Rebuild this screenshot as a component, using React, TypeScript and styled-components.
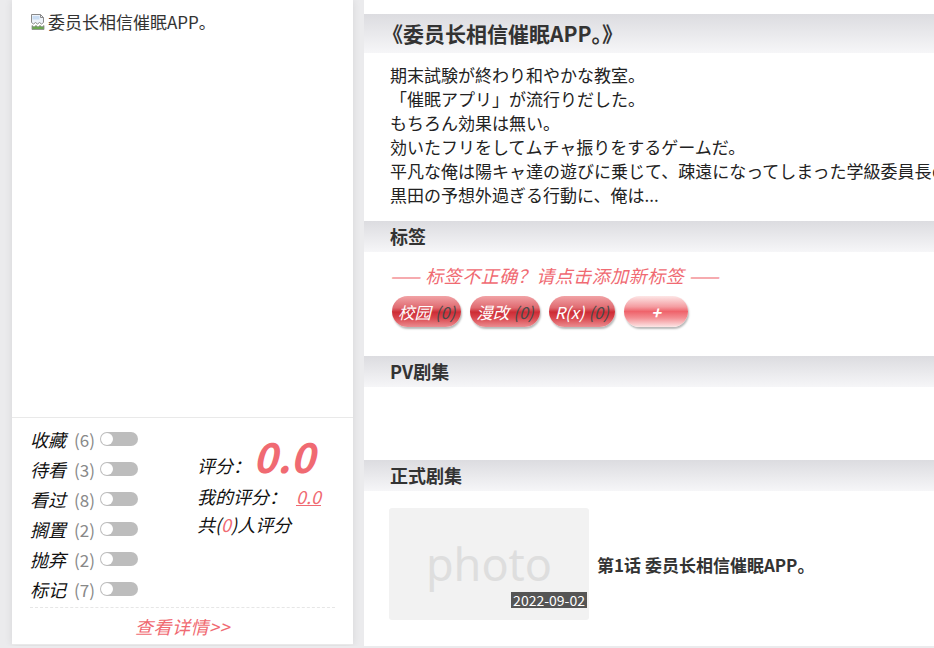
import React from "react";
import styled, { createGlobalStyle } from "styled-components";

const GlobalStyle = createGlobalStyle`
  html, body {
    margin: 0;
    padding: 0;
    background: #ebebed;
    overflow: hidden;
    font-family: "Noto Sans CJK SC", "Noto Sans CJK JP", "Noto Sans", sans-serif;
    color: #222;
  }
  * { box-sizing: border-box; }
`;

const Page = styled.div`
  display: flex;
  align-items: flex-start;
  gap: 11px;
  padding-left: 12px;
  width: max-content;
`;

const LeftCol = styled.aside`
  width: 341px;
  background: #fff;
  box-shadow: 0 0 8px rgba(0, 0, 0, 0.09);
`;

const Cover = styled.div`
  height: 418px;
  padding: 12px 18px;
  border-bottom: 1px solid #e9e9e9;
`;

const AltText = styled.span`
  display: inline-flex;
  align-items: center;
  gap: 2px;
  font-size: 17px;
  line-height: 20px;
  color: #333;
`;

const StatsBox = styled.div`
  display: flex;
  padding: 6px 18px 3px;
`;

const StatusList = styled.div`
  width: 167px;
  display: flex;
  flex-direction: column;
`;

const StatusRow = styled.div`
  display: flex;
  align-items: center;
  height: 30px;
`;

const StatusLabel = styled.span`
  font-size: 18px;
  font-style: italic;
  color: #111;
`;

const StatusCount = styled.span`
  font-size: 17px;
  color: #888;
  margin-left: 8px;
`;

const Toggle = styled.span`
  position: relative;
  display: inline-block;
  width: 38px;
  height: 14px;
  border-radius: 7px;
  background: #bdbdbd;
  margin-left: 5px;
  &::after {
    content: "";
    position: absolute;
    left: 1px;
    top: 1px;
    width: 12px;
    height: 12px;
    border-radius: 50%;
    background: #fff;
  }
`;

const RatingBox = styled.div`
  display: flex;
  flex-direction: column;
  margin-top: 9px;
`;

const RatingMain = styled.div`
  display: flex;
  align-items: baseline;
  height: 44px;
  line-height: 44px;
  margin-bottom: 5px;
`;

const RatingLine = styled.div`
  display: flex;
  align-items: baseline;
  height: 28px;
  line-height: 28px;
  font-size: 18px;
  font-style: italic;
  color: #111;
`;

const RatingLabel = styled.span`
  font-size: 18px;
  font-style: italic;
  color: #111;
`;

const BigScore = styled.span`
  font-size: 41px;
  font-weight: 700;
  font-style: italic;
  color: #f06a72;
  margin-left: 2px;
`;

const MyScore = styled.a`
  color: #f06a72;
  text-decoration: underline;
  margin-left: 9px;
`;

const Pink = styled.span`
  color: #f06a72;
`;

const Dashed = styled.div`
  margin: 0 18px;
  border-top: 1px dashed #e6e6e6;
`;

const DetailLink = styled.a`
  display: block;
  height: 37px;
  line-height: 36px;
  text-align: center;
  font-size: 18px;
  font-style: italic;
  letter-spacing: 0.5px;
  color: #f06a72;
  border-bottom: 1px solid #e9e9e9;
`;

const RightPanel = styled.main`
  width: 820px;
  background: #fff;
  padding: 14px 0 26px;
`;

const SectionHead = styled.h2<{ $big?: boolean }>`
  margin: 0;
  height: ${(p) => (p.$big ? 39 : 31)}px;
  line-height: ${(p) => (p.$big ? 39 : 31)}px;
  padding-left: ${(p) => (p.$big ? 18 : 26)}px;
  font-size: ${(p) => (p.$big ? 21 : 18)}px;
  font-weight: 700;
  color: #333;
  background: linear-gradient(to bottom, #dcdce0, #f6f6f8);
`;

const SectionBody = styled.div<{ $pad: string }>`
  padding: ${(p) => p.$pad};
`;

const Desc = styled.p`
  margin: 0;
  font-size: 17px;
  line-height: 24px;
  color: #222;
  white-space: nowrap;
`;

const TagNotice = styled.div`
  font-size: 18px;
  line-height: 24px;
  font-style: italic;
  letter-spacing: 0.5px;
  color: #f06a72;
`;

const TagRow = styled.div`
  display: flex;
  gap: 9px;
  margin: 9px 0 0 2px;
`;

const Pill = styled.span<{ $add?: boolean }>`
  display: inline-flex;
  align-items: center;
  justify-content: center;
  height: 31px;
  padding: 0 6px;
  min-width: ${(p) => (p.$add ? 64 : 0)}px;
  border-radius: 16px;
  font-size: 16.5px;
  font-style: italic;
  font-weight: ${(p) => (p.$add ? 700 : 400)};
  color: #fff;
  box-shadow: 1px 2px 2px rgba(0, 0, 0, 0.28);
  background: ${(p) =>
    p.$add
      ? "linear-gradient(to bottom, #fde6e6 0%, #f49ca0 35%, #ef636b 50%, #f38c91 70%, #fde6e6 100%)"
      : "linear-gradient(to bottom, #f1a3a6 0%, #e06a70 38%, #cd2c35 52%, #d9454c 70%, #eb8d91 100%)"};
`;

const PillCount = styled.span`
  color: #4a4a4a;
  margin-left: 4px;
`;

const Episode = styled.div`
  display: flex;
  align-items: center;
  gap: 8px;
  margin-left: -1px;
`;

const Thumb = styled.div`
  position: relative;
  width: 200px;
  height: 112px;
  border-radius: 3px;
  background: #f2f2f2;
  display: flex;
  align-items: center;
  justify-content: center;
`;

const ThumbText = styled.span`
  font-family: "Noto Sans", "Open Sans", sans-serif;
  font-size: 45px;
  color: #dedede;
  line-height: 1;
  margin-top: -2px;
`;

const DateBadge = styled.span`
  position: absolute;
  right: 2px;
  bottom: 12px;
  height: 16px;
  line-height: 16px;
  padding: 0 2px;
  font-size: 14px;
  color: #fff;
  background: #555;
`;

const EpTitle = styled.span`
  font-size: 17px;
  font-weight: 700;
  color: #333;
`;

const BrokenImage = () => (
  <svg width="16" height="18" viewBox="0 0 16 18">
    <path d="M1.5 1.5h9l3 3v5l-2 1.5-2-1.5-2 1.5-2-1.5-2 1.5-2-1.5z" fill="#eef3fa" stroke="#8a8a8a" />
    <path d="M2.5 3h7v3.5h-7z" fill="#c9dcf2" />
    <path d="M2 12.5l2 1.5 2-1.5 2 1.5 2-1.5 2 1.5 2-1.5v4h-12z" fill="#6aa84f" stroke="#8a8a8a" strokeWidth="0.8" />
    <path d="M10.5 1.5v3h3" fill="none" stroke="#8a8a8a" />
  </svg>
);

const statuses = [
  ["收藏", 6],
  ["待看", 3],
  ["看过", 8],
  ["搁置", 2],
  ["抛弃", 2],
  ["标记", 7],
] as const;

const descLines = [
  "期末試験が終わり和やかな教室。",
  "「催眠アプリ」が流行りだした。",
  "もちろん効果は無い。",
  "効いたフリをしてムチャ振りをするゲームだ。",
  "平凡な俺は陽キャ達の遊びに乗じて、疎遠になってしまった学級委員長の黒田に命令するが……",
  "黒田の予想外過ぎる行動に、俺は...",
];

const tags = ["校园", "漫改", "R(x)"];

export default function App() {
  return (
    <>
      <GlobalStyle />
      <Page>
        <LeftCol>
          <Cover>
            <AltText>
              <BrokenImage />
              委员长相信催眠APP。
            </AltText>
          </Cover>
          <StatsBox>
            <StatusList>
              {statuses.map(([label, n]) => (
                <StatusRow key={label}>
                  <StatusLabel>{label}</StatusLabel>
                  <StatusCount>({n})</StatusCount>
                  <Toggle />
                </StatusRow>
              ))}
            </StatusList>
            <RatingBox>
              <RatingMain>
                <RatingLabel>评分：</RatingLabel>
                <BigScore>0.0</BigScore>
              </RatingMain>
              <RatingLine>
                我的评分：<MyScore>0.0</MyScore>
              </RatingLine>
              <RatingLine>
                共(<Pink>0</Pink>)人评分
              </RatingLine>
            </RatingBox>
          </StatsBox>
          <Dashed />
          <DetailLink>查看详情&gt;&gt;</DetailLink>
        </LeftCol>

        <RightPanel>
          <SectionHead $big>《委员长相信催眠APP。》</SectionHead>
          <SectionBody $pad="10px 26px 14px">
            {descLines.map((l) => (
              <Desc key={l}>{l}</Desc>
            ))}
          </SectionBody>

          <SectionHead>标签</SectionHead>
          <SectionBody $pad="11px 26px 29px">
            <TagNotice>—— 标签不正确？请点击添加新标签 ——</TagNotice>
            <TagRow>
              {tags.map((t) => (
                <Pill key={t}>
                  {t}
                  <PillCount>(0)</PillCount>
                </Pill>
              ))}
              <Pill $add>+</Pill>
            </TagRow>
          </SectionBody>

          <SectionHead>PV剧集</SectionHead>
          <SectionBody $pad="73px 26px 0" />

          <SectionHead>正式剧集</SectionHead>
          <SectionBody $pad="17px 26px 0">
            <Episode>
              <Thumb>
                <ThumbText>photo</ThumbText>
                <DateBadge>2022-09-02</DateBadge>
              </Thumb>
              <EpTitle>第1话 委员长相信催眠APP。</EpTitle>
            </Episode>
          </SectionBody>
        </RightPanel>
      </Page>
    </>
  );
}
